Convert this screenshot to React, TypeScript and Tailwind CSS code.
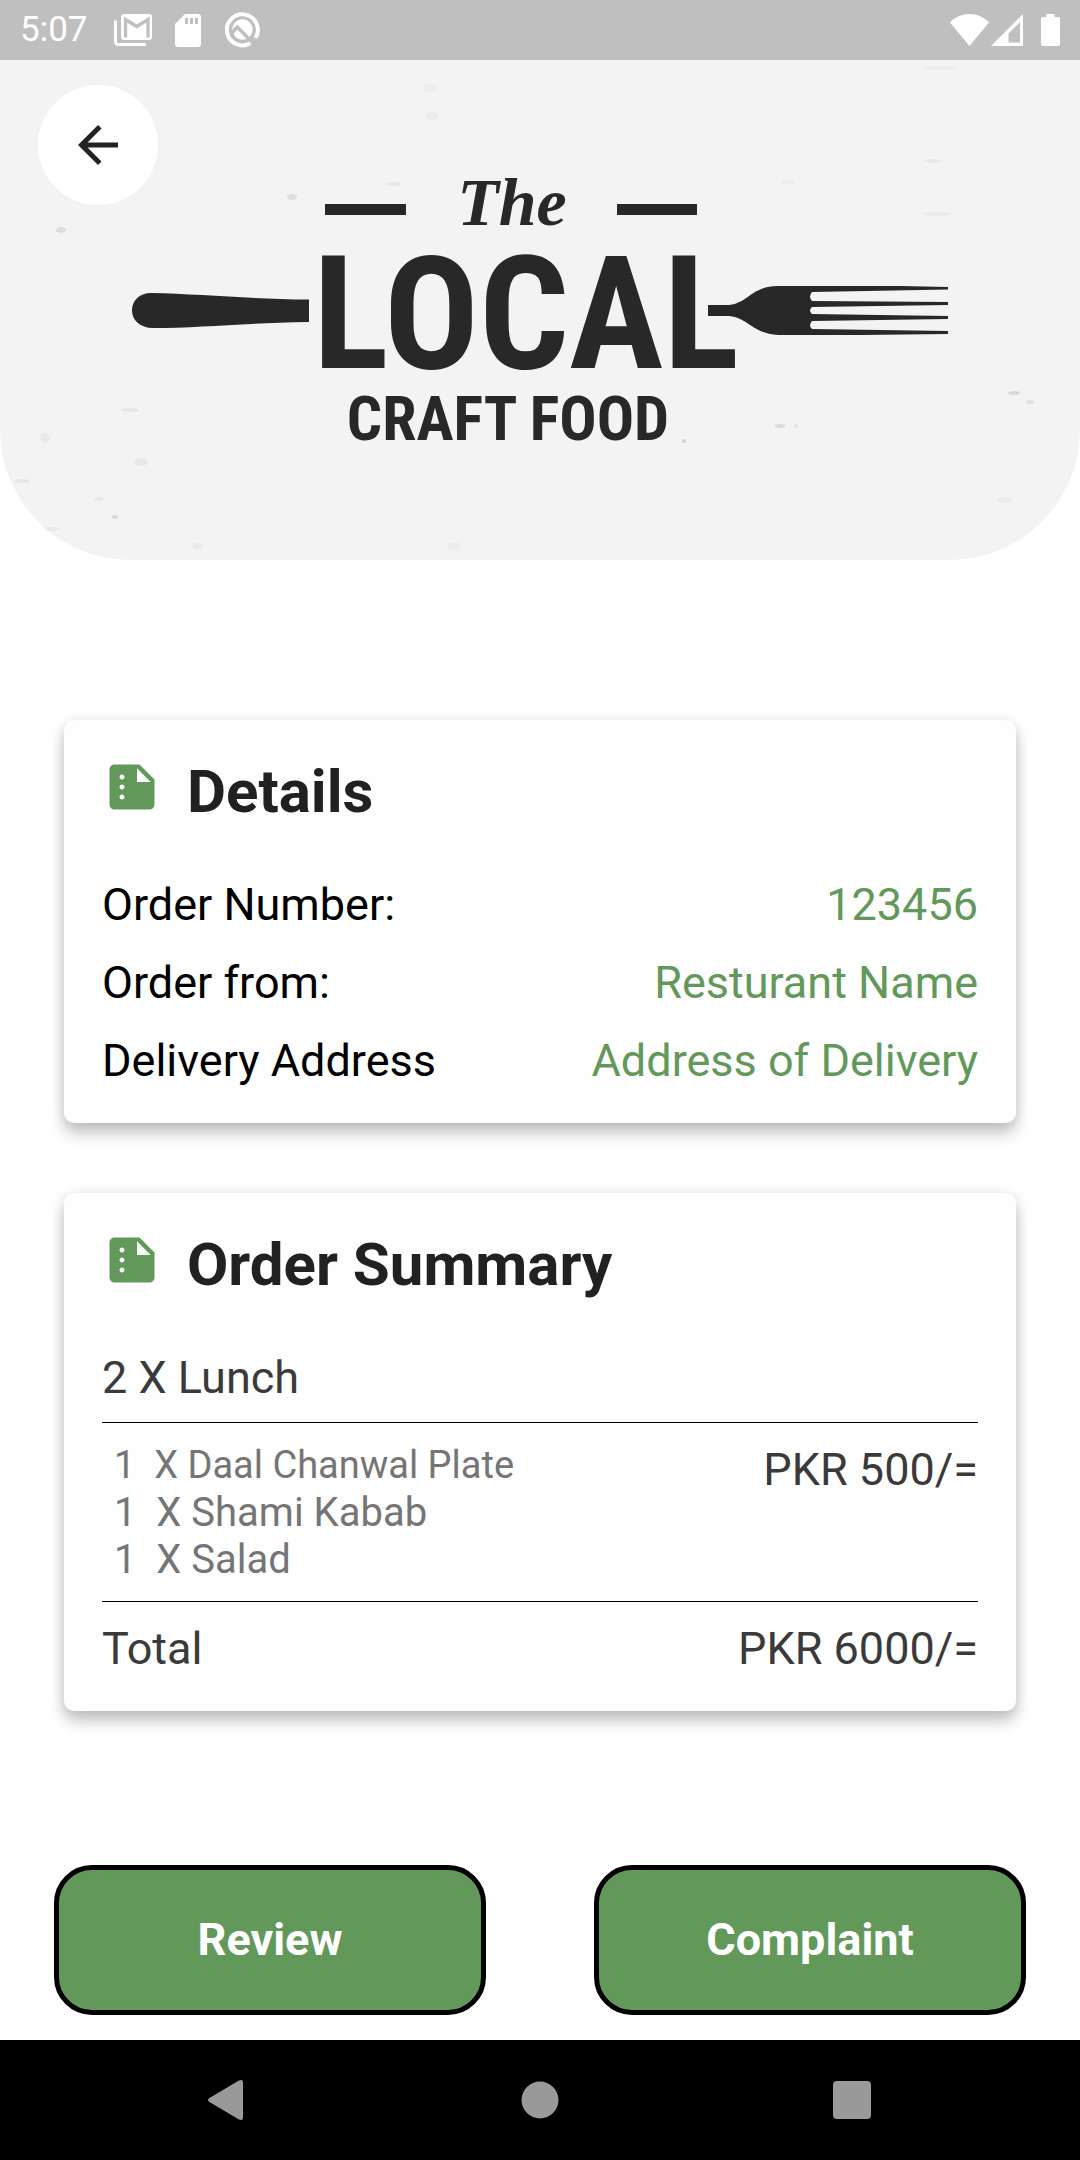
import React from "react";
import { MdArrowBack, MdSummarize } from "react-icons/md";

const details = [
  { label: "Order Number:", value: "123456" },
  { label: "Order from:", value: "Resturant Name" },
  { label: "Delivery Address", value: "Address of Delivery" },
];

// Faint paper flecks behind the logo: x, y, rx, ry, opacity
const flecks = [
  [61, 170, 5, 3, 0.1],
  [292, 137, 5, 3, 0.1],
  [394, 124, 8, 2, 0.05],
  [430, 28, 8, 4, 0.03],
  [432, 56, 6, 4, 0.03],
  [45, 378, 5, 5, 0.04],
  [130, 350, 9, 2, 0.06],
  [141, 402, 7, 4, 0.05],
  [22, 421, 8, 2, 0.06],
  [115, 457, 3, 2, 0.12],
  [99, 439, 5, 2, 0.05],
  [52, 469, 9, 2, 0.04],
  [198, 486, 6, 3, 0.04],
  [454, 486, 7, 4, 0.03],
  [780, 366, 5, 2, 0.12],
  [796, 366, 2, 2, 0.06],
  [684, 381, 2, 2, 0.16],
  [933, 101, 9, 2, 0.05],
  [938, 154, 14, 2, 0.04],
  [1014, 333, 6, 2, 0.12],
  [1030, 342, 4, 2, 0.09],
  [940, 8, 16, 2, 0.03],
  [1005, 440, 8, 3, 0.03],
  [788, 122, 7, 2, 0.03],
];

function StatusBar() {
  return (
    <header className="flex h-[60px] items-center justify-between bg-[#bfbfbf] pr-5 pl-5 text-white">
      <div className="flex items-center">
        <time className="text-[35px] leading-[60px]">5:07</time>
        <svg className="ml-[26px] h-8 w-[38px]" viewBox="0 0 38 32" fill="none" aria-label="Mail" role="img">
          <path d="M1.500 6.500v21a3 3 0 0 0 3 3H32" stroke="currentColor" strokeWidth="3" />
          <rect x="7" width="31" height="26" rx="3" fill="currentColor" />
          <path d="M11.500 23.500V5.500L22.700 12.500L34 5.500V23.500" stroke="#bfbfbf" strokeWidth="3.300" />
        </svg>
        <svg className="ml-[23px] h-[33px] w-[26px]" viewBox="0 0 26 33" aria-label="Storage" role="img">
          <path
            fill="currentColor"
            fillRule="evenodd"
            d="M10 0h13a3 3 0 0 1 3 3v27a3 3 0 0 1-3 3H3a3 3 0 0 1-3-3V10zM10 4v6h3V4zM15 4v6h3V4zM20 4v6h3V4z"
          />
        </svg>
        <svg className="ml-6 h-9 w-9" viewBox="0 0 36 36" fill="none" aria-label="System" role="img">
          <path d="M25.500 31A15.500 15.500 0 1 1 30.500 26" stroke="currentColor" strokeWidth="4" />
          <circle cx="17.500" cy="17.500" r="10.200" fill="currentColor" />
          <path d="M6 22L12.300 15L29 32" stroke="#bfbfbf" strokeWidth="3.500" />
        </svg>
      </div>
      <div className="flex items-center">
        <svg className="h-8 w-[39px]" viewBox="0 0 39 32" fill="currentColor" aria-label="Wi-Fi" role="img">
          <path d="M19.500 32L0 8.500C5 3 12 0 19.500 0S34 3 39 8.500z" />
        </svg>
        <svg className="ml-[2px] h-8 w-8" viewBox="0 0 32 32" aria-label="Signal" role="img">
          <path fill="currentColor" fillRule="evenodd" d="M32 0v32H0zM29 8L17.500 19.500V28.500H29z" />
        </svg>
        <svg className="ml-[18px] h-8 w-[19px]" viewBox="0 0 19 32" fill="currentColor" aria-label="Battery" role="img">
          <path d="M5.500 0h8v3H17a2 2 0 0 1 2 2v25a2 2 0 0 1-2 2H2a2 2 0 0 1-2-2V5a2 2 0 0 1 2-2h3.500z" />
        </svg>
      </div>
    </header>
  );
}

function Logo() {
  return (
    <svg className="block h-auto w-full" viewBox="0 0 1080 500" role="img" aria-label="The Local Craft Food">
      {flecks.map(([x, y, rx, ry, o]) => (
        <ellipse key={`${x}-${y}`} cx={x} cy={y} rx={rx} ry={ry} fill="#222" opacity={o} />
      ))}
      <g fill="#282828">
        <rect x="325" y="144" width="81" height="11" />
        <rect x="617" y="144" width="80" height="11" />
        <path d="M151 233C139 233 132 241 132 250.500S140 268 153 268C200 268 240 263 309 262V239.500C250 239 200 234 151 233z" />
        <path d="M708 245H726C748 245 750 226 778 226H900L948 227V229.500L812 232Q808 236.500 812 241L948 242V245L812 247Q808 250.500 812 254L948 256V259L812 261Q808 265.500 812 269L948 271V274L860 275H778C750 273 748 256 726 256H708z" />
        <text x="512" y="165" textAnchor="middle" fontSize="68" className="font-['Liberation_Serif'] font-bold italic">
          The
        </text>
        <text x="526" y="308" textAnchor="middle" fontSize="158" className="font-['Roboto_Condensed','Roboto',sans-serif] font-bold">
          LOCAL
        </text>
        <text x="508" y="380" textAnchor="middle" fontSize="62" className="font-['Roboto_Condensed','Roboto',sans-serif] font-bold">
          CRAFT FOOD
        </text>
      </g>
    </svg>
  );
}

function Card({ title, children }: { title: string; children: React.ReactNode }) {
  return (
    <section className="rounded-[10px] bg-[#fefefe] px-[38px] pt-[37px] pb-9 shadow-[0_10px_16px_rgba(0,0,0,0.24),0_0_14px_rgba(0,0,0,0.08)]">
      <div className="flex items-start gap-[25px]">
        <MdSummarize className="size-[60px] shrink-0 text-[#62995b]" />
        <h2 className="text-[60px] leading-[70px] font-bold text-[#212121]">{title}</h2>
      </div>
      <div className="mt-[51px]">{children}</div>
    </section>
  );
}

const actionClass =
  "h-[150px] w-[40%] rounded-[38px] border-[5px] border-black bg-[#62995b] text-[45px] font-bold text-white";

export default function App() {
  return (
    <div className="flex min-h-screen flex-col bg-white font-['Roboto',sans-serif]">
      <StatusBar />
      <div className="relative overflow-hidden rounded-b-[130px] bg-[#f3f3f3]">
        <Logo />
        <button
          type="button"
          aria-label="Back"
          className="absolute top-[25px] left-[38px] flex size-[120px] items-center justify-center rounded-full bg-white text-[#222]"
        >
          <MdArrowBack className="size-[60px]" />
        </button>
      </div>

      <main className="flex flex-1 flex-col">
        <div className="flex flex-col gap-[70px] px-16 pt-40">
          <Card title="Details">
            <dl className="flex flex-col gap-[25px] text-[45px] leading-[53px]">
              {details.map((d) => (
                <div key={d.label} className="flex justify-between">
                  <dt className="text-black">{d.label}</dt>
                  <dd className="text-right text-[#62995b]">{d.value}</dd>
                </div>
              ))}
            </dl>
          </Card>

          <Card title="Order Summary">
            <div className="text-[45px] leading-[53px] text-[#3a3a3a]">
              <h3 className="pb-[18px]">2 X Lunch</h3>
              <div className="flex justify-between border-y border-black py-[18px]">
                <ul className="pl-3 text-[40px] leading-[47px] whitespace-pre text-[#757575]">
                  <li className="text-[38px] leading-[48px]">{"1  X Daal Chanwal Plate"}</li>
                  <li>{"1  X Shami Kabab"}</li>
                  <li>{"1  X Salad"}</li>
                </ul>
                <p className="pt-[2px]">PKR 500/=</p>
              </div>
              <div className="flex justify-between pt-5">
                <p>Total</p>
                <p>PKR 6000/=</p>
              </div>
            </div>
          </Card>
        </div>

        <div className="mt-auto flex justify-around pt-16 pb-[25px]">
          <button type="button" className={actionClass}>
            Review
          </button>
          <button type="button" className={actionClass}>
            Complaint
          </button>
        </div>
      </main>

      <nav aria-label="System" className="grid h-[120px] grid-cols-3 items-center justify-items-center bg-black px-[72px] text-[#999]">
        <button type="button" aria-label="Back" className="p-4">
          <svg className="size-10" viewBox="0 0 40 40" fill="currentColor">
            <path d="M1 18.300L31 .5Q35 -1 35 3V37Q35 41 31 39.500L1 21.700Q-1 20 1 18.300z" />
          </svg>
        </button>
        <button type="button" aria-label="Home" className="p-4">
          <svg className="size-10" viewBox="0 0 40 40" fill="currentColor">
            <circle cx="20" cy="20" r="18.500" />
          </svg>
        </button>
        <button type="button" aria-label="Recent apps" className="p-4">
          <svg className="size-10" viewBox="0 0 40 40" fill="currentColor">
            <rect x="1" y="1" width="38" height="38" rx="4" />
          </svg>
        </button>
      </nav>
    </div>
  );
}
